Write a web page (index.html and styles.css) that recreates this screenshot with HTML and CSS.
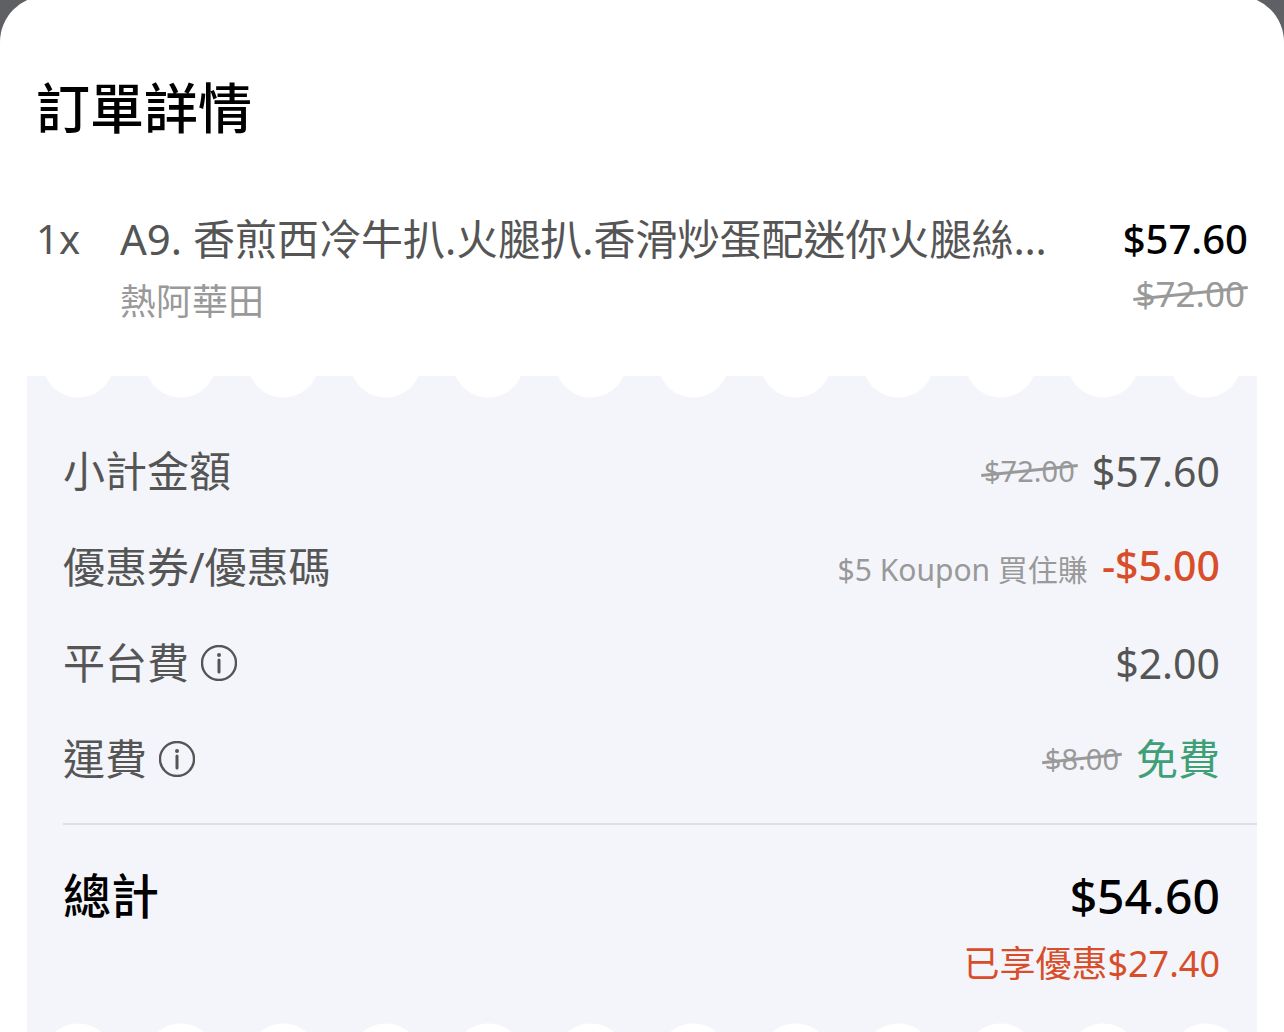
FILE: index.html
```
<!DOCTYPE html>
<html lang="zh-Hant-HK">
<head>
  <meta charset="UTF-8">
  <meta name="viewport" content="width=device-width, initial-scale=1.0">
  <title>訂單詳情</title>
  <link rel="stylesheet" href="styles.css">
</head>
<body>
  <main class="sheet">
    <h1 class="title">訂單詳情</h1>

    <section class="item">
      <span class="qty">1x</span>
      <div class="item-info">
        <div class="item-name">A9. 香煎西冷牛扒.火腿扒.香滑炒蛋配迷你火腿絲…</div>
        <div class="item-option">熱阿華田</div>
      </div>
      <div class="item-price">
        <span class="price-now">$57.60</span>
        <del class="strike">$72.00</del>
      </div>
    </section>

    <section class="receipt">
      <dl class="fees">
        <div class="row">
          <dt>小計金額</dt>
          <dd><del class="strike small">$72.00</del><span>$57.60</span></dd>
        </div>
        <div class="row">
          <dt>優惠券/優惠碼</dt>
          <dd class="coupon"><span class="note">$5 Koupon 買住賺</span><span class="discount">-$5.00</span></dd>
        </div>
        <div class="row">
          <dt>平台費
            <button type="button" class="info" aria-label="平台費說明">
              <svg viewBox="0 0 36 36"><circle cx="18" cy="18" r="17"/><path d="M18 15v12"/><circle class="dot" cx="18" cy="10" r="2"/></svg>
            </button>
          </dt>
          <dd><span>$2.00</span></dd>
        </div>
        <div class="row">
          <dt>運費
            <button type="button" class="info" aria-label="運費說明">
              <svg viewBox="0 0 36 36"><circle cx="18" cy="18" r="17"/><path d="M18 15v12"/><circle class="dot" cx="18" cy="10" r="2"/></svg>
            </button>
          </dt>
          <dd><del class="strike small">$8.00</del><span class="free">免費</span></dd>
        </div>
      </dl>

      <div class="total">
        <span class="total-label">總計</span>
        <div class="total-amount">
          <strong>$54.60</strong>
          <span class="saved">已享優惠$27.40</span>
        </div>
      </div>
    </section>
  </main>
</body>
</html>
```
FILE: styles.css
```
* {
  box-sizing: border-box;
}

body {
  margin: 0;
  height: 100vh;
  overflow: hidden;
  background-color: #5f6064;
  color: #555;
  font-family: "Noto Sans", "Noto Sans CJK TC", sans-serif;
  font-size: 42px;
  line-height: 60px;
}

.sheet {
  min-height: 100vh;
  margin-top: -4px;
  padding: 72px 27px 0;
  background-color: #fff;
  border-radius: 46px 46px 0 0;
}

.title {
  margin: 0;
  padding-left: 9px;
  color: #000;
  font-size: 54px;
  font-weight: 500;
  line-height: 80px;
}

/* ordered item */
.item {
  display: flex;
  margin-top: 61px;
  padding: 0 9px;
}

.qty {
  width: 84px;
  flex-shrink: 0;
  font-size: 40px;
}

.item-info {
  flex: 1;
  min-width: 0;
}

.item-name {
  overflow: hidden;
  white-space: nowrap;
  text-overflow: ellipsis;
}

.item-option {
  margin-top: 3px;
  color: #999;
  font-size: 36px;
}

.item-price {
  display: flex;
  flex-direction: column;
  align-items: flex-end;
  margin-left: 24px;
}

.price-now {
  color: #000;
  font-size: 40px;
  font-weight: 500;
}

.strike {
  position: relative;
  padding: 0 3px;
  color: #999;
  font-size: 35px;
  line-height: 50px;
  text-decoration: none;
}

/* slanted line across the old price */
.strike::after {
  content: "";
  position: absolute;
  left: 0;
  right: 0;
  top: 50%;
  height: 3px;
  margin-top: -2px;
  background-color: #999;
  transform: rotate(-6deg);
}

.strike.small {
  font-size: 29px;
}

/* receipt with scalloped top and bottom edges */
.receipt {
  margin-top: 44px;
  padding: 47px 0 51px 36px;
  background:
    radial-gradient(circle at 50% -14px, #fff 35px, transparent 36px) 0 0 / calc(100% / 12) 22px repeat-x,
    radial-gradient(circle at 50% 36px, #fff 35px, transparent 36px) 0 100% / calc(100% / 12) 22px repeat-x,
    #f4f5fa;
}

.fees {
  margin: 0;
  border-bottom: 2px solid #dfe0e5;
}

.row {
  display: flex;
  align-items: center;
  justify-content: space-between;
  height: 96px;
  padding-right: 37px;
}

.fees .row:last-child {
  height: 112px;
  padding-bottom: 16px;
}

.row dt {
  display: flex;
  align-items: center;
  gap: 12px;
}

.row dd {
  display: flex;
  align-items: center;
  gap: 14px;
  margin: 0;
  font-size: 41px;
}

.row .coupon {
  align-items: baseline;
}

.info {
  width: 36px;
  height: 36px;
  padding: 0;
  border: 0;
  background: none;
  color: #555;
  cursor: pointer;
}

.info svg {
  display: block;
  fill: none;
  stroke: currentColor;
  stroke-width: 2.4;
  stroke-linecap: round;
}

.info path {
  stroke-width: 3;
}

.info .dot {
  fill: currentColor;
  stroke: none;
}

.note {
  color: #999;
  font-size: 30px;
}

.discount {
  color: #d84e2a;
  font-weight: 500;
}

.free {
  color: #3f9f77;
  font-size: 42px;
}

.total {
  display: flex;
  justify-content: space-between;
  padding: 36px 37px 0 0;
  color: #000;
  font-size: 48px;
  font-weight: 500;
  line-height: 70px;
}

.total-amount {
  display: flex;
  flex-direction: column;
  align-items: flex-end;
}

.total-amount strong {
  font-weight: 500;
}

.saved {
  margin-top: 3px;
  color: #d84e2a;
  font-size: 36px;
  font-weight: 400;
  line-height: 60px;
}
```
